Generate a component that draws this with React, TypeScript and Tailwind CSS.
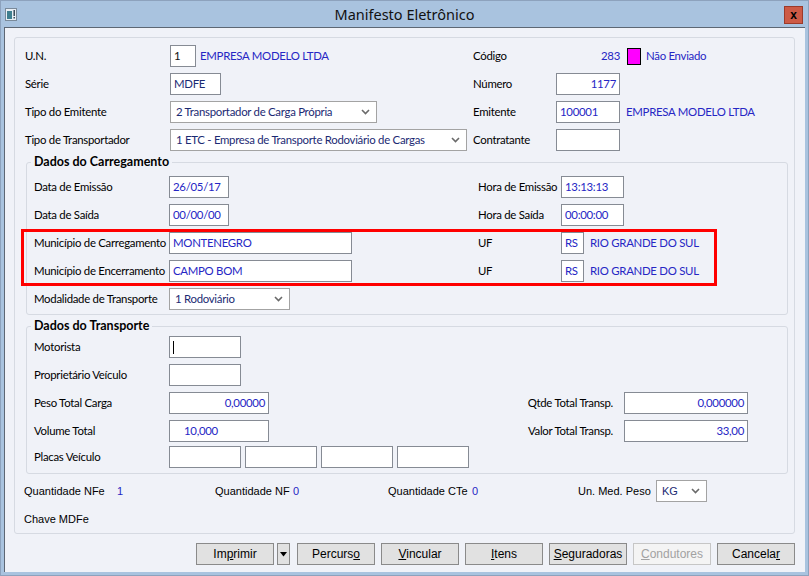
import type { ReactNode } from 'react'

const blue = 'text-[#2626c4]'

function Box({ className = '', children }: { className?: string; children?: ReactNode }) {
  return (
    <div
      className={`h-[22px] shrink-0 border border-[#868b94] bg-white flex items-center px-[3px] whitespace-nowrap ${blue} ${className}`}
    >
      {children}
    </div>
  )
}

function Chevron() {
  return (
    <svg width="9" height="6" viewBox="0 0 9 6" className="shrink-0">
      <path d="M1 1 L4.5 4.5 L8 1" fill="none" stroke="#6a6a6a" strokeWidth="1.6" />
    </svg>
  )
}

function Select({ className = '', children }: { className?: string; children: ReactNode }) {
  return (
    <div
      className={`h-[22px] shrink-0 border border-[#a3a3a3] bg-white flex items-center justify-between pl-[5px] pr-[6px] text-[#1b2a73] whitespace-nowrap ${className}`}
    >
      <span>{children}</span>
      <Chevron />
    </div>
  )
}

function Label({ className = '', children }: { className?: string; children: ReactNode }) {
  return <div className={`shrink-0 whitespace-nowrap text-black ${className}`}>{children}</div>
}

function Btn({ children, disabled = false }: { children: ReactNode; disabled?: boolean }) {
  return (
    <div
      className={`h-[22px] w-[78px] flex items-center justify-center border ${
        disabled ? 'border-[#c6c6c6] bg-[#f4f4f4] text-[#a2a2a2]' : 'border-[#8a8a8a] bg-[#e1e1e1] text-black'
      }`}
    >
      {children}
    </div>
  )
}

export default function App() {
  return (
    <div className="relative w-[809px] h-[576px] bg-[#a9c3df] border border-[#8da2bd] flex flex-col font-['Lato',sans-serif] text-[11.4px] tracking-[-0.28px]">
      {/* title bar */}
      <div className="h-[26px] grid grid-cols-[1fr_auto_1fr] items-center tracking-normal">
        <div className="pl-[4px] pt-[1px]">
          <svg width="12" height="13" viewBox="0 0 12 13">
            <rect x="0.5" y="0.5" width="11" height="12" fill="#e8eef4" stroke="#7a8a9a" />
            <rect x="2" y="3" width="5" height="8" fill="#3f7f8f" />
            <rect x="8.5" y="2" width="1.4" height="6" fill="#2a3a4a" />
            <rect x="8.5" y="9" width="1.4" height="1.5" fill="#2a3a4a" />
          </svg>
        </div>
        <div className="text-[14.5px] text-[#111] font-['Noto_Sans',sans-serif] pt-[2px]">Manifesto Eletrônico</div>
        <div className="flex justify-end pr-[5px]">
          <div className="w-[19px] h-[18px] mt-[2px] bg-[#cd5a45] border border-[#9c3a2a] flex items-center justify-center text-[12px] font-bold text-black font-['Liberation_Sans',sans-serif]">
            x
          </div>
        </div>
      </div>

      {/* client area */}
      <div className="flex-1 mx-[3px] mb-[3px] bg-[#f0f2f8] border-l border-t border-[#5d6774] pl-[9px] pt-[9px]">
        <div className="w-[781px] border border-[#d6dae2] rounded-[3px] pt-[4px] pl-[10px]">
          {/* header rows */}
          <div className="h-[28px] flex items-center">
            <div className="w-[448px] flex items-center">
              <Label className="w-[145px]">U.N.</Label>
              <Box className="w-[26px] !text-[#111]">1</Box>
              <span className={`ml-[4px] ${blue}`}>EMPRESA MODELO LTDA</span>
            </div>
            <Label className="w-[83px]">Código</Label>
            <span className={`w-[64px] text-right ${blue}`}>283</span>
            <span className="ml-[7px] w-[14px] h-[17px] bg-[#ff00ff] border border-black" />
            <span className={`ml-[5px] ${blue}`}>Não Enviado</span>
          </div>
          <div className="h-[28px] flex items-center">
            <div className="w-[448px] flex items-center">
              <Label className="w-[145px]">Série</Label>
              <Box className="w-[51px] !text-[#1b2a73]">MDFE</Box>
            </div>
            <Label className="w-[83px]">Número</Label>
            <Box className="w-[64px] justify-end">1177</Box>
          </div>
          <div className="h-[28px] flex items-center">
            <div className="w-[448px] flex items-center">
              <Label className="w-[145px]">Tipo do Emitente</Label>
              <Select className="w-[207px]">2 Transportador de Carga Própria</Select>
            </div>
            <Label className="w-[83px]">Emitente</Label>
            <Box className="w-[64px]">100001</Box>
            <span className={`ml-[6px] ${blue}`}>EMPRESA MODELO LTDA</span>
          </div>
          <div className="h-[28px] flex items-center">
            <div className="w-[448px] flex items-center">
              <Label className="w-[145px]">Tipo de Transportador</Label>
              <Select className="w-[297px]">1 ETC - Empresa de Transporte Rodoviário de Cargas</Select>
            </div>
            <Label className="w-[83px]">Contratante</Label>
            <Box className="w-[64px]" />
          </div>

          {/* Dados do Carregamento */}
          <fieldset className="mt-[1px] ml-[1px] w-[762px] border border-[#d6dae2] rounded-[3px] pl-[7px] pb-[1px]">
            <legend className="-ml-[3px] px-[3px] font-bold text-[12.5px] leading-[14px] tracking-normal text-black">
              Dados do Carregamento
            </legend>
            <div className="pt-[4px]">
              <div className="h-[28px] flex items-center">
                <div className="w-[444px] flex items-center">
                  <Label className="w-[135px]">Data de Emissão</Label>
                  <Box className="w-[60px]">26/05/17</Box>
                </div>
                <Label className="w-[83px]">Hora de Emissão</Label>
                <Box className="w-[63px]">13:13:13</Box>
              </div>
              <div className="h-[28px] flex items-center">
                <div className="w-[444px] flex items-center">
                  <Label className="w-[135px]">Data de Saída</Label>
                  <Box className="w-[60px]">00/00/00</Box>
                </div>
                <Label className="w-[83px]">Hora de Saída</Label>
                <Box className="w-[63px]">00:00:00</Box>
              </div>
              <div className="h-[28px] flex items-center">
                <div className="w-[444px] flex items-center">
                  <Label className="w-[135px]">Município de Carregamento</Label>
                  <Box className="w-[183px]">MONTENEGRO</Box>
                </div>
                <Label className="w-[83px]">UF</Label>
                <Box className="w-[23px]">RS</Box>
                <span className={`ml-[6px] ${blue}`}>RIO GRANDE DO SUL</span>
              </div>
              <div className="h-[28px] flex items-center">
                <div className="w-[444px] flex items-center">
                  <Label className="w-[135px]">Município de Encerramento</Label>
                  <Box className="w-[183px]">CAMPO BOM</Box>
                </div>
                <Label className="w-[83px]">UF</Label>
                <Box className="w-[23px]">RS</Box>
                <span className={`ml-[6px] ${blue}`}>RIO GRANDE DO SUL</span>
              </div>
              <div className="h-[28px] flex items-center">
                <Label className="w-[135px]">Modalidade de Transporte</Label>
                <Select className="w-[121px]">1 Rodoviário</Select>
              </div>
            </div>
          </fieldset>

          {/* Dados do Transporte */}
          <fieldset className="mt-[4px] ml-[1px] w-[762px] border border-[#d6dae2] rounded-[3px] pl-[7px] pb-[4px]">
            <legend className="-ml-[3px] px-[3px] font-bold text-[12.5px] leading-[14px] tracking-normal text-black">
              Dados do Transporte
            </legend>
            <div className="h-[28px] flex items-center">
              <Label className="w-[135px]">Motorista</Label>
              <Box className="w-[72px] !text-black">
                <span className="w-px h-[13px] bg-black" />
              </Box>
            </div>
            <div className="h-[28px] flex items-center">
              <Label className="w-[135px]">Proprietário Veículo</Label>
              <Box className="w-[72px]" />
            </div>
            <div className="h-[28px] flex items-center">
              <Label className="w-[135px]">Peso Total Carga</Label>
              <Box className="w-[100px] justify-end">0,00000</Box>
              <Label className="w-[344px] text-right">Qtde Total Transp.</Label>
              <Box className="ml-[11px] w-[124px] justify-end">0,000000</Box>
            </div>
            <div className="h-[28px] flex items-center">
              <Label className="w-[135px]">Volume Total</Label>
              <Box className="w-[100px] pl-[14px]">10,000</Box>
              <Label className="w-[344px] text-right">Valor Total Transp.</Label>
              <Box className="ml-[11px] w-[124px] justify-end">33,00</Box>
            </div>
            <div className="h-[24px] flex items-center">
              <Label className="w-[135px]">Placas Veículo</Label>
              <div className="flex gap-[4px]">
                <Box className="w-[72px]" />
                <Box className="w-[72px]" />
                <Box className="w-[72px]" />
                <Box className="w-[72px]" />
              </div>
            </div>
          </fieldset>

          {/* totals */}
          <div className="mt-[3px] -ml-[1px] font-['Liberation_Sans',sans-serif] text-[11px] tracking-normal">
            <div className="h-[28px] flex items-center">
              <Label className="w-[93px]">Quantidade NFe</Label>
              <span className={`w-[98px] ${blue}`}>1</span>
              <Label className="w-[78px]">Quantidade NF</Label>
              <span className={`w-[95px] ${blue}`}>0</span>
              <Label className="w-[84px]">Quantidade CTe</Label>
              <span className={`w-[106px] ${blue}`}>0</span>
              <Label className="w-[78px]">Un. Med. Peso</Label>
              <Select className="w-[51px] text-[11px]">KG</Select>
            </div>
            <div className="h-[28px] flex items-center">
              <Label>Chave MDFe</Label>
            </div>
          </div>
        </div>

        {/* buttons */}
        <div className="mt-[9px] w-[781px] flex justify-end items-center font-['Liberation_Sans',sans-serif] text-[12px] tracking-normal">
          <Btn>
            <span>
              Im<span className="underline">p</span>rimir
            </span>
          </Btn>
          <div className="ml-[3px] h-[22px] w-[13px] border border-[#8a8a8a] bg-[#e1e1e1] flex items-center justify-center">
            <svg width="7" height="5" viewBox="0 0 7 5">
              <path d="M0 0 H7 L3.5 4.5 Z" fill="#000" />
            </svg>
          </div>
          <div className="ml-[7px] flex gap-[6px]">
            <Btn>
              <span>
                Percurs<span className="underline">o</span>
              </span>
            </Btn>
            <Btn>
              <span>
                <span className="underline">V</span>incular
              </span>
            </Btn>
            <Btn>
              <span>
                <span className="underline">I</span>tens
              </span>
            </Btn>
            <Btn>
              <span>
                <span className="underline">S</span>eguradoras
              </span>
            </Btn>
            <Btn disabled>
              <span>
                <span className="underline">C</span>ondutores
              </span>
            </Btn>
            <Btn>
              <span>
                Cancela<span className="underline">r</span>
              </span>
            </Btn>
          </div>
        </div>
      </div>

      {/* red highlight annotation */}
      <div className="absolute left-[20px] top-[228px] w-[696px] h-[57px] border-[3px] border-[#ff0000] pointer-events-none" />
    </div>
  )
}
